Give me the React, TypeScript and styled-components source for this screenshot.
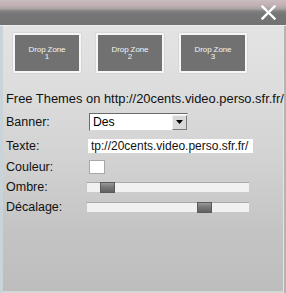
import React from "react";
import styled, { createGlobalStyle } from "styled-components";

const Global = createGlobalStyle`
  html, body { margin: 0; padding: 0; }
  body { width: 286px; height: 293px; overflow: hidden; font-family: "Liberation Sans", Arial, sans-serif; }
`;

const Window = styled.div`
  width: 286px;
  height: 293px;
  display: flex;
  flex-direction: column;
  box-sizing: border-box;
  border-left: 3px solid #c9d3da;
  border-right: 2px solid #b4b4b4;
  box-shadow: inset -1px 0 0 #e4e4e4, inset 0 -2px 0 #d6d6d6;
  background: linear-gradient(#e6e6e6 0px, #dedede 80px, #d2d2d2 160px, #c4c4c4 230px, #bdbdbd 293px);
`;

const TitleBar = styled.div`
  height: 25px;
  flex: none;
  display: flex;
  justify-content: flex-end;
  align-items: center;
  padding-right: 10px;
  margin-left: -3px;
  margin-right: -2px;
  background: linear-gradient(#cbbdc0 0px, #bfaeb2 6px, #a6a2a0 9px, #828282 11px, #767676 14px, #727272 24px);
  border-bottom: 1px solid #ececec;
`;

const Close = styled.svg`
  width: 15px;
  height: 15px;
  display: block;
`;

const Body = styled.div`
  flex: 1;
  display: flex;
  flex-direction: column;
  padding-left: 3px;
`;

const ZoneRow = styled.div`
  display: flex;
  gap: 15px;
  margin-top: 7px;
  padding-left: 7px;
`;

const Zone = styled.div`
  width: 68px;
  height: 40px;
  box-sizing: border-box;
  border: 2px solid #f6f6f6;
  background: #717171;
  box-shadow: 0 0 1px rgba(0,0,0,0.25);
  color: #f4f4f4;
  font-size: 8px;
  line-height: 7.5px;
  text-align: center;
  display: flex;
  flex-direction: column;
  justify-content: center;
  letter-spacing: -0.1px;
`;

const Heading = styled.div`
  margin-top: 19px;
  height: 14px;
  line-height: 14px;
  font-size: 12.9px;
  color: #111;
  white-space: nowrap;
`;

const Row = styled.div<{ $top: number }>`
  display: flex;
  align-items: center;
  height: 20px;
  margin-top: ${(p) => p.$top}px;
`;

const Label = styled.div`
  width: 80px;
  flex: none;
  font-size: 12.5px;
  color: #111;
`;

const Select = styled.div`
  margin-left: 3px;
  width: 99px;
  height: 18px;
  box-sizing: border-box;
  border-top: 1px solid #6a6a6a;
  border-left: 1px solid #6a6a6a;
  border-right: 1px solid #d8d8d8;
  border-bottom: 1px solid #d8d8d8;
  background: #fff;
  display: flex;
  align-items: center;
  font-size: 12.2px;
  color: #000;
  padding-left: 3px;
`;

const SelectText = styled.span`
  flex: 1;
`;

const Arrow = styled.div`
  width: 15px;
  height: 15px;
  box-sizing: border-box;
  border: 1px solid #7a7a7a;
  border-top-color: #f0f0f0;
  border-left-color: #f0f0f0;
  background: #d8d8d8;
  display: flex;
  align-items: center;
  justify-content: center;
`;

const Input = styled.div`
  margin-left: 2px;
  width: 165px;
  height: 14px;
  background: #fff;
  font-size: 12px;
  line-height: 14px;
  color: #111;
  padding-left: 3px;
  box-sizing: border-box;
  overflow: hidden;
  white-space: nowrap;
`;

const Swatch = styled.div`
  margin-left: 3px;
  width: 16px;
  height: 14px;
  box-sizing: border-box;
  background: #fff;
  border: 1px solid #a8a8a8;
`;

const Track = styled.div`
  width: 163px;
  height: 10px;
  box-sizing: border-box;
  background: #f1f1f1;
  border-top: 1px solid #a9a9a9;
  border-left: 1px solid #c8c8c8;
  display: flex;
  align-items: center;
`;

const Thumb = styled.div`
  width: 15px;
  height: 11px;
  box-sizing: border-box;
  border: 1px solid #5a5a5a;
  background: linear-gradient(#9a9a9a, #7a7a7a 40%, #626262);
`;

const Slider = ({ pos }: { pos: number }) => (
  <Track>
    <Thumb style={{ marginLeft: pos }} />
  </Track>
);

export default function App() {
  return (
    <>
      <Global />
      <Window>
        <TitleBar>
          <Close viewBox="0 0 15 15">
            <path d="M1.5 1.5 L13.5 13.5 M13.5 1.5 L1.5 13.5" stroke="#fff" strokeWidth="2.4" strokeLinecap="square" />
          </Close>
        </TitleBar>
        <Body>
          <ZoneRow>
            {[1, 2, 3].map((n) => (
              <Zone key={n}>
                <span>Drop Zone</span>
                <span>{n}</span>
              </Zone>
            ))}
          </ZoneRow>
          <Heading>Free Themes on http://20cents.video.perso.sfr.fr/</Heading>
          <Row $top={6}>
            <Label>Banner:</Label>
            <Select>
              <SelectText>Des</SelectText>
              <Arrow>
                <svg width="7" height="4" viewBox="0 0 7 4">
                  <path d="M0 0 H7 L3.5 4 Z" fill="#000" />
                </svg>
              </Arrow>
            </Select>
          </Row>
          <Row $top={4}>
            <Label>Texte:</Label>
            <Input>tp://20cents.video.perso.sfr.fr/</Input>
          </Row>
          <Row $top={1}>
            <Label>Couleur:</Label>
            <Swatch />
          </Row>
          <Row $top={0}>
            <Label>Ombre:</Label>
            <Slider pos={13} />
          </Row>
          <Row $top={0}>
            <Label>Décalage:</Label>
            <Slider pos={110} />
          </Row>
        </Body>
      </Window>
    </>
  );
}
